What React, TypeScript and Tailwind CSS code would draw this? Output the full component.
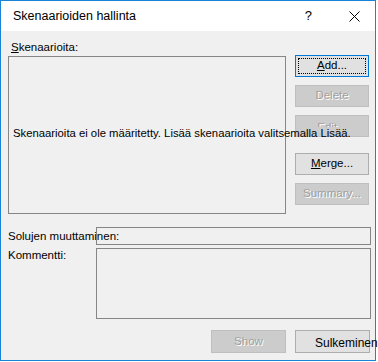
export default function App() {
  const font = "font-['Liberation_Sans',Arial,sans-serif]"
  const btn =
    "flex h-[22px] w-[74px] items-center justify-center border border-[#adadad] bg-[#e1e1e1] text-black"
  const disabled =
    "flex h-[22px] w-[74px] items-center justify-center border border-[#bfbfbf] bg-[#cccccc] text-[#a0a0a0] [text-shadow:1px_1px_0_#ffffff]"

  return (
    <div className={`${font} relative h-[361px] w-[376px] border border-[#1883d7] bg-[#f0f0f0] text-[11.5px] text-black`}>
      {/* Title bar */}
      <div className="flex h-[30px] items-center bg-white pl-[12px]">
        <span className="text-[12.5px]">Skenaarioiden hallinta</span>
        <span className="ml-auto mr-[37px] text-[13px]">?</span>
        <svg width="11" height="11" viewBox="0 0 11 11" className="mr-[15px]">
          <path d="M0.5 0.5 L10.5 10.5 M10.5 0.5 L0.5 10.5" stroke="#000" strokeWidth="1" />
        </svg>
      </div>

      <div className="pl-[7px]">
        {/* Scenarios + buttons */}
        <div className="flex">
          <div className="w-[278px]">
            <div className="mt-[10px] h-[13px] pl-[3px] leading-[13px]">
              <span className="underline">S</span>kenaarioita:
            </div>
            <div className="mt-[2px] h-[158px] border border-[#868686] bg-[#f0f0f0]" />
          </div>
          <div className="ml-[9px] mt-[24px] flex flex-col">
            <div className="flex h-[22px] w-[74px] items-center justify-center border border-[#0078d7] bg-[#e1e1e1] outline-1 outline-dotted outline-black -outline-offset-4">
              <span>
                <span className="underline">A</span>dd...
              </span>
            </div>
            <div className={`${disabled} mt-[8px]`}>Delete</div>
            <div className="mt-[8px] flex h-[22px] w-[74px] justify-center overflow-hidden border border-[#bfbfbf] bg-[#cccccc] text-[#a0a0a0] [text-shadow:1px_1px_0_#ffffff]">
              <span className="mt-[4px] h-[7px] overflow-hidden leading-[14px]">Edit...</span>
            </div>
            <div className={`${btn} mt-[16px]`}>
              <span>
                <span className="underline">M</span>erge...
              </span>
            </div>
            <div className={`${disabled} mt-[8px]`}>Summary...</div>
          </div>
        </div>

        {/* Changing cells */}
        <div className="mt-[13px] flex">
          <div className="w-[88px] whitespace-nowrap pt-[2px] leading-[14px]">Solujen muuttaminen:</div>
          <div className="h-[18px] w-[275px] border border-[#868686]" />
        </div>

        {/* Comment */}
        <div className="mt-[3px] flex">
          <div className="w-[88px] whitespace-nowrap leading-[14px]">Kommentti:</div>
          <div className="h-[71px] w-[275px] border border-[#868686]" />
        </div>

        {/* Bottom buttons */}
        <div className="mt-[11px] flex pl-[203px]">
          <div className="flex h-[23px] w-[75px] items-center justify-center border border-[#bfbfbf] bg-[#cccccc] text-[#a0a0a0] [text-shadow:1px_1px_0_#ffffff]">
            Show
          </div>
          <div className="ml-[9px] flex h-[23px] w-[75px] items-center justify-start whitespace-nowrap border border-[#adadad] bg-[#e1e1e1] pl-[19px] pt-[3px] text-[12px]">
            Sulkeminen
          </div>
        </div>
      </div>

      {/* Empty-list message drawn over the list */}
      <span className="absolute left-[12px] top-[125px] whitespace-nowrap text-[11.3px] leading-[14px]">
        Skenaarioita ei ole määritetty. Lisää skenaarioita valitsemalla Lisää.
      </span>
    </div>
  )
}
